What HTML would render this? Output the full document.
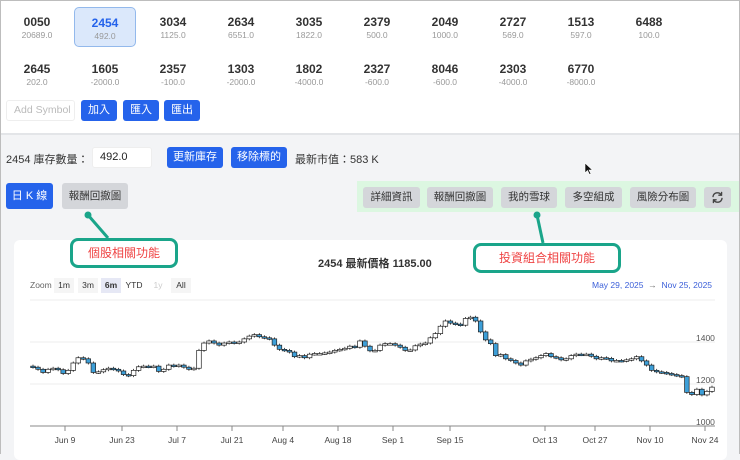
<!DOCTYPE html>
<html><head><meta charset="utf-8"><style>
*{box-sizing:border-box;margin:0;padding:0}
body{width:740px;height:454px;overflow:hidden;background:#f3f4f6;font-family:"Liberation Sans","Noto Sans CJK TC",sans-serif;position:relative;color:#333}
.frame{position:absolute;inset:0;border:1px solid #bdbdbd;border-bottom:none;pointer-events:none;z-index:10}
.top{position:absolute;left:0;top:0;width:740px;height:135px;background:#fff;border-bottom:2px solid #e3e5e8}
.t{position:absolute;width:62px;text-align:center}
.t b{display:block;font-size:12px;font-weight:bold;color:#333;line-height:14px}
.t i{display:block;font-style:normal;font-size:8.5px;color:#999;line-height:12px}
.sel{background:#dbe8fb;border:1px solid #93b9ec;border-radius:5px}
.sel b{color:#2563eb}
.a{position:absolute}
.btn{position:absolute;height:21px;border-radius:3px;background:#2563eb;color:#fff;font-size:11px;line-height:21px;text-align:center}
.gb{position:absolute;height:21px;border-radius:3px;background:#d4d6da;color:#333;font-size:10.5px;line-height:21px;text-align:center}
.inp{position:absolute;background:#fff;border:1px solid #eee;border-radius:3px;font-size:11px;padding-left:7px}
.call{position:absolute;border:3px solid #1aa58a;border-radius:8px;background:#fff;color:#ef4444;font-size:12px;text-align:center;z-index:5}
.card{position:absolute;left:14px;top:240px;width:713px;height:220px;background:#fff;border-radius:6px}
</style></head><body>
<div class="frame"></div>
<div class="top"></div>
<div class="t" style="left:6px;top:15px"><b>0050</b><i>20689.0</i></div>
<div class="t sel" style="left:74px;top:7px;height:40px;padding-top:8px"><b>2454</b><i>492.0</i></div>
<div class="t" style="left:142px;top:15px"><b>3034</b><i>1125.0</i></div>
<div class="t" style="left:210px;top:15px"><b>2634</b><i>6551.0</i></div>
<div class="t" style="left:278px;top:15px"><b>3035</b><i>1822.0</i></div>
<div class="t" style="left:346px;top:15px"><b>2379</b><i>500.0</i></div>
<div class="t" style="left:414px;top:15px"><b>2049</b><i>1000.0</i></div>
<div class="t" style="left:482px;top:15px"><b>2727</b><i>569.0</i></div>
<div class="t" style="left:550px;top:15px"><b>1513</b><i>597.0</i></div>
<div class="t" style="left:618px;top:15px"><b>6488</b><i>100.0</i></div>
<div class="t" style="left:6px;top:62px"><b>2645</b><i>202.0</i></div>
<div class="t" style="left:74px;top:62px"><b>1605</b><i>-2000.0</i></div>
<div class="t" style="left:142px;top:62px"><b>2357</b><i>-100.0</i></div>
<div class="t" style="left:210px;top:62px"><b>1303</b><i>-2000.0</i></div>
<div class="t" style="left:278px;top:62px"><b>1802</b><i>-4000.0</i></div>
<div class="t" style="left:346px;top:62px"><b>2327</b><i>-600.0</i></div>
<div class="t" style="left:414px;top:62px"><b>8046</b><i>-600.0</i></div>
<div class="t" style="left:482px;top:62px"><b>2303</b><i>-4000.0</i></div>
<div class="t" style="left:550px;top:62px"><b>6770</b><i>-8000.0</i></div>
<div class="inp" style="left:6px;top:100px;width:69px;height:21px;line-height:19px;color:#bbb;font-size:10.5px;padding-left:7px">Add Symbol</div>
<div class="btn" style="left:81px;top:100px;width:36px">加入</div>
<div class="btn" style="left:123px;top:100px;width:36px">匯入</div>
<div class="btn" style="left:164px;top:100px;width:36px">匯出</div>

<div class="a" style="left:6px;top:151px;font-size:11px">2454 庫存數量：</div>
<div class="inp" style="left:92px;top:147px;width:60px;height:21px;line-height:19px;color:#222">492.0</div>
<div class="btn" style="left:167px;top:147px;width:56px">更新庫存</div>
<div class="btn" style="left:231px;top:147px;width:56px">移除標的</div>
<div class="a" style="left:295px;top:151px;font-size:11px">最新市值：583 K</div>
<svg class="a" style="left:584px;top:162px" width="10" height="14"><path d="M1 1 L1 11 L3.5 8.5 L5.5 12.5 L7 11.8 L5 8 L8.5 8 Z" fill="#111" stroke="#fff" stroke-width="0.6"/></svg>

<div class="btn" style="left:6px;top:183px;width:47px;height:26px;line-height:26px">日 K 線</div>
<div class="gb" style="left:62px;top:183px;width:66px;height:26px;line-height:26px">報酬回撤圖</div>
<div class="a" style="left:357px;top:181px;width:383px;height:31px;background:#dcf7e1"></div>
<div class="gb" style="left:363px;top:187px;width:57px">詳細資訊</div>
<div class="gb" style="left:427px;top:187px;width:66px">報酬回撤圖</div>
<div class="gb" style="left:501px;top:187px;width:56px">我的雪球</div>
<div class="gb" style="left:565px;top:187px;width:57px">多空組成</div>
<div class="gb" style="left:630px;top:187px;width:66px">風險分布圖</div>
<div class="gb" style="left:704px;top:187px;width:27px"><svg width="27" height="21" viewBox="0 0 27 21"><g fill="none" stroke="#444" stroke-width="1.4" stroke-linecap="round"><path d="M9 9.5 A4.5 4.5 0 0 1 17.3 8"/><path d="M18 11.5 A4.5 4.5 0 0 1 9.7 13"/><path d="M17.6 5.5 L17.5 8.2 L14.9 8.2"/><path d="M9.4 15.5 L9.5 12.8 L12.1 12.8"/></g></svg></div>

<div class="card"></div>
<svg class="a" style="left:0;top:0;z-index:6" width="740" height="454">
<line x1="88" y1="215" x2="108" y2="238" stroke="#1aa58a" stroke-width="3"/><circle cx="88" cy="215" r="3.5" fill="#1aa58a"/>
<line x1="537" y1="215" x2="543" y2="243" stroke="#1aa58a" stroke-width="3"/><circle cx="537" cy="215" r="3.5" fill="#1aa58a"/>
</svg>
<div class="call" style="left:70px;top:238px;width:108px;height:30px;line-height:24px">個股相關功能</div>
<div class="call" style="left:473px;top:243px;width:148px;height:30px;line-height:24px">投資組合相關功能</div>

<div class="a" style="left:318px;top:255px;font-size:11px;font-weight:bold;color:#333">2454 最新價格 1185.00</div>
<div class="a" style="left:30px;top:280px;font-size:8.5px;color:#666;line-height:11px">Zoom</div>
<div class="a" style="left:54px;top:278px;width:20px;height:15px;background:#f5f5f5;font-size:8.5px;line-height:15px;text-align:center">1m</div>
<div class="a" style="left:78px;top:278px;width:20px;height:15px;background:#f5f5f5;font-size:8.5px;line-height:15px;text-align:center">3m</div>
<div class="a" style="left:101px;top:278px;width:20px;height:15px;background:#e6e8f5;font-size:8.5px;line-height:15px;text-align:center;font-weight:bold">6m</div>
<div class="a" style="left:124px;top:278px;width:20px;height:15px;font-size:8.5px;line-height:15px;text-align:center">YTD</div>
<div class="a" style="left:149px;top:278px;width:18px;height:15px;font-size:8.5px;line-height:15px;text-align:center;color:#ccc">1y</div>
<div class="a" style="left:171px;top:278px;width:20px;height:15px;background:#f5f5f5;font-size:8.5px;line-height:15px;text-align:center">All</div>
<div class="a" style="left:592px;top:280px;font-size:8.5px;color:#3b5fd9">May 29, 2025 &nbsp;<span style="color:#666">→</span>&nbsp; Nov 25, 2025</div>

<svg id="ch" class="a" style="left:0;top:0" width="740" height="454"></svg>
<script>
var s='';
[300,342,384].forEach(function(y){s+='<line x1="30" x2="715" y1="'+y+'" y2="'+y+'" stroke="#eee"/>'});
s+='<line x1="30" x2="715" y1="426" y2="426" stroke="#888" stroke-width="1"/>';
[[1400,338],[1200,380],[1000,422]].forEach(function(p){s+='<text x="696" y="'+(p[1]+3)+'" font-size="8.5" fill="#555" font-family="Liberation Sans">'+p[0]+'</text>'});
var tk=[['Jun 9',65],['Jun 23',122],['Jul 7',177],['Jul 21',232],['Aug 4',283],['Aug 18',338],['Sep 1',393],['Sep 15',450],['Oct 13',545],['Oct 27',595],['Nov 10',650],['Nov 24',705]];
tk.forEach(function(t){s+='<line x1="'+t[1]+'" x2="'+t[1]+'" y1="426" y2="431" stroke="#888"/><text x="'+t[1]+'" y="443" font-size="8.5" fill="#444" text-anchor="middle" font-family="Liberation Sans">'+t[0]+'</text>'});
var c=[1280,1270,1255,1270,1275,1268,1250,1265,1300,1325,1320,1300,1255,1258,1268,1275,1270,1262,1245,1240,1265,1282,1285,1282,1285,1260,1270,1290,1285,1290,1280,1270,1275,1360,1395,1405,1395,1385,1395,1400,1395,1400,1415,1428,1435,1425,1420,1415,1385,1365,1360,1352,1330,1335,1325,1342,1345,1345,1348,1352,1360,1365,1370,1380,1375,1405,1380,1358,1360,1385,1392,1392,1385,1375,1360,1362,1382,1390,1395,1420,1440,1475,1500,1490,1485,1480,1512,1518,1500,1448,1410,1392,1335,1340,1320,1312,1300,1290,1310,1318,1325,1335,1345,1330,1325,1315,1320,1335,1342,1340,1342,1332,1320,1325,1322,1310,1312,1310,1315,1320,1330,1310,1290,1265,1258,1255,1250,1245,1240,1235,1160,1150,1175,1148,1165,1185];
var n=c.length,x0=33,dx=(712-33)/(n-1);
function Y(p){return 426-(p-1000)*0.21}
for(var i=0;i<n;i++){var o=i?c[i-1]:c[0]+5,cl=c[i],x=x0+i*dx,up=cl>=o;var hi=Math.max(o,cl)+7,lo=Math.min(o,cl)-7;
var yt=Y(Math.max(o,cl)),yb=Y(Math.min(o,cl));if(yb-yt<1.5)yb=yt+1.5;
s+='<line x1="'+x+'" x2="'+x+'" y1="'+Y(hi)+'" y2="'+Y(lo)+'" stroke="#222" stroke-width="0.8"/>';
s+='<rect x="'+(x-2.3)+'" y="'+yt+'" width="4.6" height="'+(yb-yt)+'" fill="'+(up?'#fff':'#3d9fd8')+'" stroke="#222" stroke-width="0.7"/>';}
document.getElementById('ch').innerHTML=s;
</script>
</body></html>
